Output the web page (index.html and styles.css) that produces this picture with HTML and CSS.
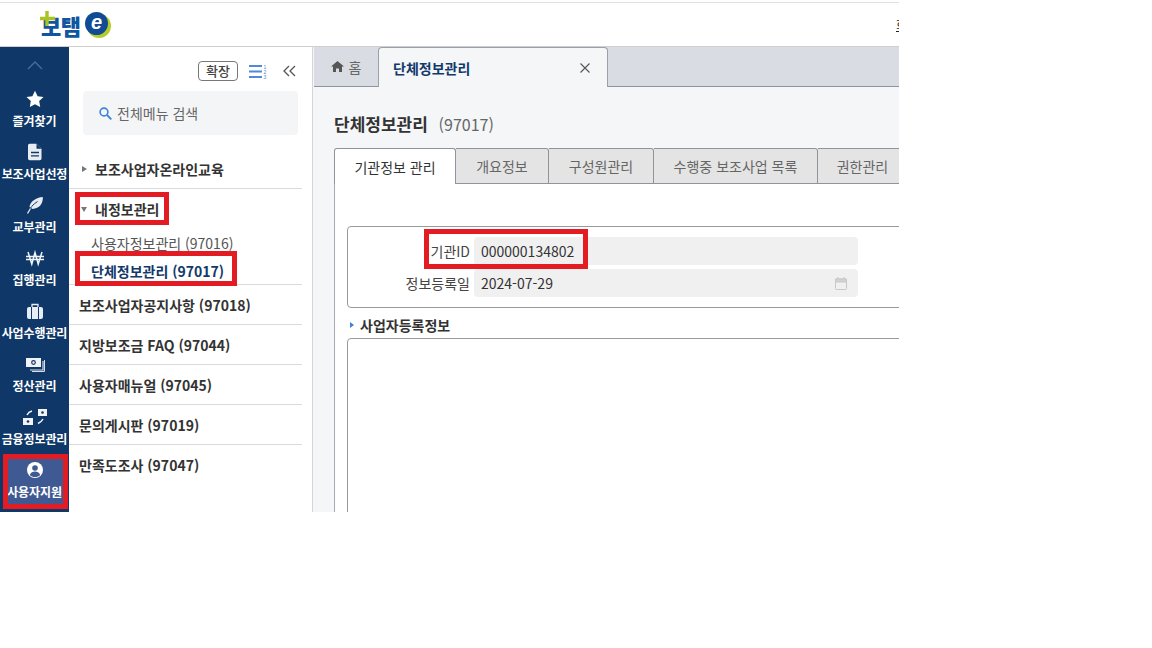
FILE: index.html
```html
<!DOCTYPE html>
<html lang="ko">
<head>
<meta charset="utf-8">
<title>단체정보관리</title>
<link rel="stylesheet" href="styles.css">
</head>
<body>
<div class="page">
  <header class="top">
    <div class="logo">
      <svg class="logo-plus" width="18" height="18" viewBox="0 0 18 18"><path d="M8 1v15M1 8.500h15" stroke="#a9c422" stroke-width="3.400" fill="none"/></svg>
      <span class="logo-text">보탬</span>
      <svg class="logo-e" width="28" height="28" viewBox="0 0 28 28"><circle cx="15" cy="15" r="12" fill="#b5cc2a"/><circle cx="12.500" cy="12.500" r="11.500" fill="#0f4c93"/><text x="12.500" y="18" class="logo-e-text">e</text></svg>
    </div>
    <span class="top-cut">회원</span>
  </header>
  <div class="body">
    <nav class="rail">
      <div class="rail-up"><svg width="16" height="9" viewBox="0 0 16 9"><path d="M1 8l7-7 7 7" fill="none" stroke="#4d6d96" stroke-width="1.300"/></svg></div>
      <a class="rail-item"><svg width="18" height="18" viewBox="0 0 18 18"><path d="M9 .8l2.600 5.400 5.900.8-4.300 4.100 1 5.900L9 14.200l-5.200 2.800 1-5.900L.5 7l5.900-.8z" fill="#fff"/></svg><span>즐겨찾기</span></a>
      <a class="rail-item"><svg width="18" height="18" viewBox="0 0 18 18"><path d="M3.500.800h7l5 5V15.500a1.700 1.700 0 0 1-1.700 1.700H3.700A1.700 1.700 0 0 1 2 15.500V2.500A1.700 1.700 0 0 1 3.500.800z" fill="#e8edf3"/><path d="M10.500.800v5h5" fill="#0f3868"/><path d="M5 9.500h8M5 12.800h8" stroke="#0f3868" stroke-width="1.300"/></svg><span>보조사업선정</span></a>
      <a class="rail-item"><svg width="18" height="18" viewBox="0 0 18 18"><path d="M3.500 11C4 5.500 10 1.500 16.800 1c.5 6.500-3.500 11.500-10.300 12z" fill="#e8edf3"/><path d="M1.500 17.500C3.500 12 7 8.500 11.500 5.500" stroke="#0f3868" stroke-width="1" fill="none"/><path d="M1.500 17.500l3-5" stroke="#e8edf3" stroke-width="1.300"/></svg><span>교부관리</span></a>
      <a class="rail-item"><svg width="20" height="18" viewBox="0 0 20 18"><path d="M3 3l3.800 12L10 3.500 13.200 15 17 3M1 7.500h18M1 10.500h18" fill="none" stroke="#f0f3f7" stroke-width="1.500"/></svg><span>집행관리</span></a>
      <a class="rail-item"><svg width="18" height="18" viewBox="0 0 18 18"><path d="M6 5V2.500h6V5" fill="none" stroke="#e8edf3" stroke-width="1.300"/><rect x="1" y="5" width="16" height="12" rx="2" fill="#e8edf3"/><path d="M5.500 5v12M12.500 5v12" stroke="#0f3868" stroke-width="1"/></svg><span>사업수행관리</span></a>
      <a class="rail-item"><svg width="20" height="18" viewBox="0 0 20 18"><path d="M18 6v9H5" fill="none" stroke="#d8dfe8" stroke-width="1.200"/><path d="M19.500 5v11.500H7" fill="none" stroke="#d8dfe8" stroke-width="1"/><rect x="1" y="3" width="15" height="9" fill="#f0f3f7"/><circle cx="8.500" cy="7.500" r="1.800" fill="none" stroke="#0f3868" stroke-width="1.200"/></svg><span>정산관리</span></a>
      <a class="rail-item"><svg width="26" height="18" viewBox="0 0 26 18"><rect x="16" y="1" width="9" height="7" fill="#f0f3f7"/><rect x="1" y="10" width="10" height="7" fill="#f0f3f7"/><circle cx="20.500" cy="4.500" r="1.300" fill="#0f3868"/><circle cx="6" cy="13.500" r="1.300" fill="#0f3868"/><path d="M5 7c1-2 3-3.500 5-4M21 11c-1 2-3 3.500-5 4.500" fill="none" stroke="#f0f3f7" stroke-width="1.500"/></svg><span>금융정보관리</span></a>
      <a class="rail-item is-active"><svg width="18" height="18" viewBox="0 0 18 18"><circle cx="9" cy="9" r="8" fill="#fff"/><circle cx="9" cy="7" r="2.800" fill="#3f5a92"/><path d="M3.800 14c1-2.600 3-3.400 5.200-3.400s4.200.8 5.200 3.400C12.800 15.400 11 16 9 16s-3.800-.6-5.200-2z" fill="#3f5a92"/></svg><span>사용자지원</span></a>
    </nav>
    <aside class="menu">
      <div class="menu-tools">
        <button class="expand">확장</button>
        <svg width="18" height="15" viewBox="0 0 18 15"><path d="M0 2h13M0 7.500h13M0 13h13" stroke="#4f8ad8" stroke-width="1.800"/><text x="14.500" y="4.500" class="digit">1</text><text x="14.500" y="9.500" class="digit">2</text><text x="14.500" y="14.500" class="digit">3</text></svg>
        <svg class="collapse" width="13" height="12" viewBox="0 0 13 12"><path d="M6 1L1 6l5 5M12 1L7 6l5 5" fill="none" stroke="#555" stroke-width="1.300"/></svg>
      </div>
      <div class="search">
        <svg width="13" height="13" viewBox="0 0 13 13"><circle cx="5" cy="5" r="3.900" fill="none" stroke="#3d82dc" stroke-width="1.600"/><path d="M8 8l4.300 4.300" stroke="#3d82dc" stroke-width="1.800"/></svg>
        <span>전체메뉴 검색</span>
      </div>
      <ul class="tree">
        <li class="tree-row first"><i class="caret"></i>보조사업자온라인교육</li>
        <li class="tree-group">
          <div class="tree-head"><i class="caret down"></i>내정보관리</div>
          <div class="tree-sub">사용자정보관리 (97016)</div>
          <div class="tree-sub current">단체정보관리 (97017)</div>
        </li>
        <li class="tree-row plain">보조사업자공지사항 (97018)</li>
        <li class="tree-row plain">지방보조금 FAQ (97044)</li>
        <li class="tree-row plain">사용자매뉴얼 (97045)</li>
        <li class="tree-row plain">문의게시판 (97019)</li>
        <li class="tree-row plain last">만족도조사 (97047)</li>
      </ul>
    </aside>
    <main class="main">
      <div class="doc-tabs">
        <div class="doc-home"><svg width="13" height="11" viewBox="0 0 13 11"><path d="M6.500 0L0 5.500h2V11h3V7.500h3V11h3V5.500h2z" fill="#555"/></svg><span>홈</span></div>
        <div class="doc-tab"><b>단체정보관리</b><svg width="10" height="10" viewBox="0 0 10 10"><path d="M.5.500l9 9M9.500.500l-9 9" stroke="#555" stroke-width="1.100"/></svg></div>
      </div>
      <div class="content">
        <h1 class="title">단체정보관리 <small>(97017)</small></h1>
        <div class="tabs">
          <div class="tab on">기관정보 관리</div>
          <div class="tab w93">개요정보</div>
          <div class="tab w105">구성원관리</div>
          <div class="tab w164">수행중 보조사업 목록</div>
          <div class="tab w90">권한관리</div>
        </div>
        <div class="pane">
          <div class="form">
            <div class="field"><label>기관ID</label><div class="value">000000134802</div></div>
            <div class="field"><label>정보등록일</label><div class="value">2024-07-29<svg width="12" height="13" viewBox="0 0 12 13"><rect x=".5" y="2" width="11" height="10.500" rx="1" fill="none" stroke="#c8c8c8"/><path d="M.5 2h11v3H.5zM3 0v2M9 0v2" fill="#d2d2d2" stroke="#c8c8c8"/></svg></div></div>
          </div>
          <h2 class="sub-title">사업자등록정보</h2>
          <div class="box"></div>
        </div>
      </div>
    </main>
  </div>
  <div class="mark m1"></div>
  <div class="mark m2"></div>
  <div class="mark m3"></div>
  <div class="mark m4"></div>
</div>
</body>
</html>
```
FILE: styles.css
```css
* { box-sizing: border-box; }
html, body { margin: 0; background: #fff; }
body { font-family: "Noto Sans CJK KR", "Noto Sans", sans-serif; color: #333; }
.page { position: relative; width: 899px; height: 512px; overflow: hidden; padding-top: 2px; display: flex; flex-direction: column; }

.top { height: 45px; flex: none; border-top: 1px solid #e2e2e2; border-bottom: 1px solid #cfcfcf; display: flex; align-items: center; justify-content: space-between; padding-left: 41px; }
.logo { position: relative; display: flex; align-items: center; gap: 2px; }
.logo-plus { position: absolute; left: -2px; top: -1px; }
.logo-text { font-size: 22px; line-height: 26px; font-weight: 900; color: #12559f; letter-spacing: -.6px; padding-top: 1px; width: 41px; white-space: nowrap; }
.logo-e-text { font: italic 700 20px "Liberation Sans", sans-serif; fill: #fff; text-anchor: middle; }
.top-cut { font-size: 12px; text-decoration: underline; flex: none; width: 3px; white-space: nowrap; color: #222; }

.body { flex: 1; min-height: 0; display: flex; }

.rail { width: 69px; flex: none; background: #0f3868; display: flex; flex-direction: column; }
.rail-up { height: 41px; flex: none; display: flex; align-items: center; justify-content: center; padding-bottom: 5px; }
.rail-item { height: 53px; flex: none; display: flex; flex-direction: column; align-items: center; padding-top: 2px; color: #fff; font-size: 12px; font-weight: 700; }
.rail-item svg { height: 18px; flex: none; }
.rail-item span { line-height: 16px; margin-top: 5px; white-space: nowrap; letter-spacing: -.1px; }
.is-active { background: #3f5a92; margin: 0 3px; height: 50px; }

.menu { width: 244px; flex: none; border-right: 1px solid #d4d6da; padding: 14px 10px 0 0; background: #fff; }
.menu-tools { display: flex; align-items: center; height: 20px; padding-left: 129px; gap: 11px; }
.expand { width: 40px; height: 20px; padding: 0; border: 1px solid #777; border-radius: 4px; background: #fff; font: 500 13px/18px "Noto Sans CJK KR", sans-serif; color: #444; }
.digit { font: 5px "Liberation Sans", sans-serif; fill: #4f8ad8; }
.collapse { margin-left: 5px; }
.search { height: 44px; margin: 10px 4px 0 14px; padding-left: 16px; background: #f4f5f7; border-radius: 4px; display: flex; align-items: center; gap: 5px; font-size: 14px; color: #666; }
.tree { list-style: none; margin: 12px 0 0; padding: 0; font-size: 14px; font-weight: 700; color: #333; }
.tree-row { height: 40px; border-bottom: 1px solid #d9dbdf; display: flex; align-items: center; padding-left: 26px; position: relative; line-height: 20px; }
.tree-row.first { height: 42px; padding-top: 3px; }
.tree-row.plain { padding-left: 10px; padding-top: 0; }
.tree-row.last { border-bottom: 0; }
.tree-group { border-bottom: 1px solid #d9dbdf; height: 96px; padding-top: 9px; }
.tree-head { position: relative; height: 22px; line-height: 22px; padding-left: 26px; margin-bottom: 13px; }
.tree-sub { height: 28px; line-height: 20px; padding: 0 0 0 22px; font-weight: 400; color: #555; }
.tree-sub.current { font-weight: 700; color: #12396b; padding-top: 0; }
.caret { position: absolute; left: 13px; top: 50%; margin-top: -2px; border-left: 5px solid #777; border-top: 3.500px solid transparent; border-bottom: 3.500px solid transparent; }
.tree-row .caret { margin-top: -2px; }
.caret.down { left: 12px; margin-top: -2px; border-top: 5px solid #777; border-left: 3.500px solid transparent; border-right: 3.500px solid transparent; border-bottom: 0; }

.main { flex: 1; min-width: 0; background: #f4f6f8; display: flex; flex-direction: column; }
.doc-tabs { height: 40px; flex: none; background: #d9dce3; border-bottom: 1px solid #8d94a0; display: flex; margin-left: 1px; }
.doc-home { width: 64px; height: 39px; display: flex; align-items: center; justify-content: center; gap: 5px; font-size: 14px; color: #666; }
.doc-tab { width: 230px; height: 40px; background: #f4f6f8; border: 1px solid #9aa0ab; border-bottom: 0; border-radius: 4px 4px 0 0; display: flex; align-items: center; justify-content: space-between; padding: 0 17px 0 14px; font-size: 14px; }
.doc-tab b { color: #12396b; font-weight: 700; }
.content { flex: 1; min-height: 0; padding: 0 0 0 21px; display: flex; flex-direction: column; }
.title { margin: 23px 0 11px; height: 27px; flex: none; font-size: 17px; line-height: 27px; font-weight: 700; color: #333; white-space: nowrap; }
.title small { margin-left: 6px; font-size: 16px; font-weight: 400; color: #666; }
.tabs { display: flex; height: 36px; flex: none; position: relative; z-index: 1; }
.tab { height: 36px; flex: none; display: flex; align-items: center; justify-content: center; font-size: 14px; color: #666; background: #e4e4e4; border: 1px solid #8f949c; border-left: 0; border-radius: 0 3px 0 0; white-space: nowrap; }
.tab.on { width: 122px; background: #fff; color: #333; border-left: 1px solid #8f949c; border-bottom: 0; border-radius: 3px 3px 0 0; }
.w93 { width: 93px; }
.w105 { width: 105px; }
.w164 { width: 164px; }
.w90 { width: 90px; }
.pane { flex: 1; min-height: 0; background: #fff; border-left: 1px solid #a6abb3; padding: 42px 0 0 12px; }
.form { height: 82px; width: 600px; border: 1px solid #999; border-radius: 4px; padding: 10px 0 0; }
.field { display: flex; align-items: center; height: 28px; margin-bottom: 4px; font-size: 14px; color: #444; }
.field label { width: 122px; text-align: right; flex: none; white-space: nowrap; }
.value { margin-left: 4px; width: 384px; height: 28px; background: #f0f0f0; border-radius: 4px; padding: 0 7px; line-height: 28px; color: #333; display: flex; align-items: center; justify-content: space-between; }
.value svg { margin-right: 4px; }
.sub-title { position: relative; margin: 7px 0 3px; height: 20px; padding-left: 13px; font-size: 14px; line-height: 20px; font-weight: 700; color: #333; }
.sub-title::before { content: ""; position: absolute; left: 3px; top: 7px; border-left: 4px solid #3d82dc; border-top: 3px solid transparent; border-bottom: 3px solid transparent; }
.box { height: 200px; width: 600px; border: 1px solid #999; border-radius: 4px; }

.mark { position: absolute; border: 5px solid #e31b23; }
.m1 { left: 75px; top: 192px; width: 94px; height: 33px; }
.m2 { left: 75px; top: 251px; width: 162px; height: 35px; }
.m3 { left: 424px; top: 229px; width: 164px; height: 40px; }
.m4 { left: 3px; top: 454px; width: 65px; height: 55px; }
```
